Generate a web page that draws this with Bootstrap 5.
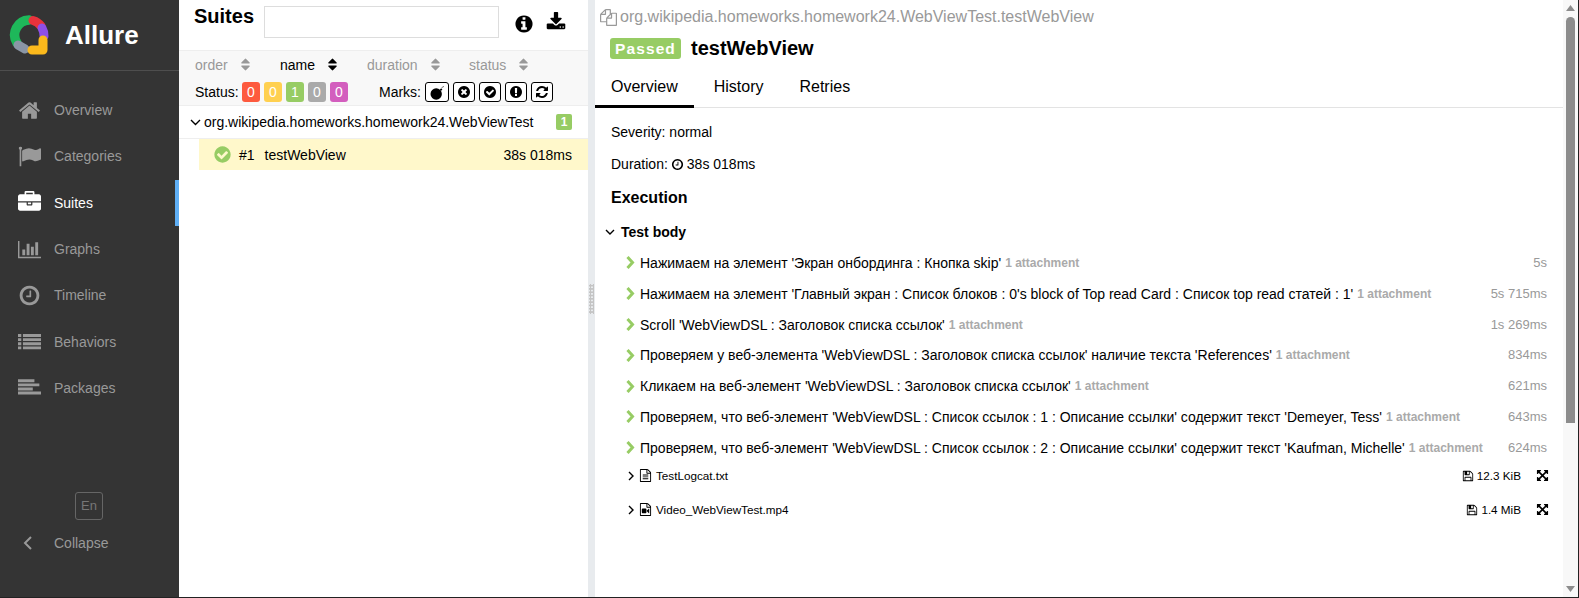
<!DOCTYPE html>
<html lang="en">
<head>
    <meta charset="UTF-8">
    <meta name="viewport" content="width=device-width, initial-scale=1.0">
    <title>Allure Report</title>
    <link href="https://cdn.jsdelivr.net/npm/bootstrap@5.3.0/dist/css/bootstrap.min.css" rel="stylesheet">
    <style>
        html, body { height: 100%; overflow: hidden; }
        body { font-family: "Liberation Sans", Arial, sans-serif; font-size: 14px; line-height: 20px; color: #000; background: #fff; }
        .fa { width: 1em; height: 1em; fill: currentColor; flex: none; display: block; }
        .app-shell { height: 598px; border-right: 1px solid #222; border-bottom: 1px solid #222; }

        /* side menu */
        .side-menu { width: 179px; flex: none; background: #343434; color: #999; }
        .side-brand { height: 71px; border-bottom: 1px solid #4e4e4e; padding-left: 8px; }
        .side-brand-name { font-size: 26px; font-weight: 700; color: #fff; margin-left: 15px; }
        .side-links { margin-top: 16px; }
        .side-link { height: 46.3px; padding-left: 18px; color: #999; text-decoration: none; }
        .side-link .fa { font-size: 23px; }
        .side-link span { margin-left: 13px; }
        .side-link.is-active { color: #fff; border-right: 4px solid #5faff5; }
        .lang-box { width: 28px; height: 28px; margin: 0 0 8px 75px; border: 1px solid #666; border-radius: 3px; color: #777; font-size: 13px; }
        .side-collapse { height: 30px; padding-left: 23px; margin-bottom: 39px; }
        .side-collapse span { margin-left: 22px; }

        /* tree pane */
        .tree-pane { width: 409px; flex: none; }
        .tree-head { height: 51px; padding: 6px 22px 0 15px; border-bottom: 1px solid #eee; }
        .tree-title { font-size: 20px; font-weight: 700; line-height: 24px; width: 70px; margin-top: -2px; }
        .tree-search { width: 235px; height: 32px; border: 1px solid #ddd; border-radius: 0; padding: 0 6px; }
        .tree-info { font-size: 20px; margin: 8px 0 0 15px; }
        .tree-save { font-size: 20px; margin: 6px 0 0 12px; }
        .tree-tools { height: 55px; background: #f8f8f8; border-bottom: 1px solid #eee; padding: 3px 0 0 16px; }
        .sort-row { height: 21px; color: #999; }
        .sort-col { display: flex; align-items: center; gap: 10px; }
        .sort-col .fa { font-size: 15px; }
        .filter-row { margin-top: 7px; height: 20px; }
        .status-label { width: 47px; }
        .status-pill { width: 18px; height: 20px; border-radius: 3px; color: #fff; text-align: center; margin-right: 4px; }
        .st-failed { background: #fd5a3e; }
        .st-broken { background: #ffd050; }
        .st-passed { background: #97cc64; }
        .st-skipped { background: #aaa; }
        .st-unknown { background: #d35ebe; }
        .marks-label { width: 46px; margin-left: 27px; }
        .mark-btn { width: 22px; height: 20px; padding: 0; border: 1px solid #000; border-radius: 3px; background: #fff; color: #000; margin-right: 4px; }
        .mark-btn:first-of-type { width: 24px; }
        .mark-btn .fa { font-size: 14px; }
        .mark-btn:first-of-type .fa { font-size: 17px; }
        .group-row { height: 33px; padding: 0 16px 0 11px; border-bottom: 1px solid #eee; }
        .group-arrow { margin-right: 3px; }
        .group-count { width: 16px; height: 16px; border-radius: 2px; background: #97cc64; color: #fff; font-size: 12px; font-weight: 700; line-height: 16px; text-align: center; }
        .case-row { height: 31px; margin-left: 20px; padding: 0 16px 0 14px; background: #fff8cb; }
        .case-ok { color: #97cc64; font-size: 19px; }
        .case-num { margin-left: 7px; }
        .case-name { margin-left: 10px; }

        .pane-split { width: 7px; flex: none; background: #e8ebee; }
        .pane-grip { width: 5px; height: 30px; background-image: radial-gradient(#c4c4c4 1.3px, transparent 1.4px); background-size: 3px 3.3px; }

        /* detail pane */
        .detail-pane { min-width: 0; }
        .crumb-row { height: 34px; padding-left: 5px; color: #999; font-size: 16px; }
        .crumb-row .fa { font-size: 17px; margin-right: 3px; }
        .title-row { height: 27px; padding-left: 15px; }
        .state-tag { width: 71px; height: 21px; margin-top: 1px; background: #97cc64; color: #fff; font-size: 15.5px; font-weight: 700; letter-spacing: 1.1px; border-radius: 3px; line-height: 21px; text-align: center; }
        .case-title { font-size: 20px; font-weight: 700; margin-left: 10px; }
        .tab-strip { height: 47px; border-bottom: 1px solid #e3e3e3; gap: 4px; }
        .tab-strip .nav-link { font-size: 16px; color: #000; padding: 16px 16px 0; height: 47px; line-height: 20px; }
        .tab-strip .nav-link.active { border-bottom: 3px solid #000; }
        .detail-body { padding: 14px 0 0 16px; }
        .info-line { height: 32px; }
        .info-line .fa { font-size: 13px; margin: 0 3px; }
        .exec-title { font-size: 16px; font-weight: 700; line-height: 20px; margin: 2px 0 14px; }
        .body-title { font-weight: 700; height: 20px; margin: 0 0 11px -6px; }
        .body-title svg { margin-right: 6px; }
        .step-list { margin-left: 15px; padding-right: 16px; }
        .step-row { height: 30.8px; padding-bottom: 11px; }
        .step-arrow { margin-right: 5px; flex: none; }
        .step-note { color: #aaa; font-size: 12px; font-weight: 700; margin-left: 4px; }
        .step-time { margin-left: auto; color: #999; font-size: 13px; }
        .file-row { height: 34px; font-size: 11.7px; padding-bottom: 20px; }
        .file-row .fa { font-size: 13px; }
        .file-arrow { margin: 0 4px 0 2px; flex: none; }
        .file-name { margin-left: 4px; }
        .file-size { margin-left: auto; display: flex; align-items: center; gap: 3px; }
        .file-size .fa { font-size: 12px; }
        .file-open { margin: 0 -2px 0 15px; }

        .fake-scroll { width: 15px; flex: none; background: #f8f8f8; padding: 5px 3px; }
        .scroll-thumb { width: 9px; height: 406px; margin-top: 6px; background: #8c8c8c; border-radius: 5px 5px 0 0; }
    </style>
</head>
<body>
<svg width="0" height="0" class="position-absolute">
    <symbol id="i-home" viewBox="0 0 1792 1792"><path d="M1472 992v480q0 26-19 45t-45 19h-384v-384h-256v384h-384q-26 0-45-19t-19-45v-480q0-1 .5-3t.5-3l575-474 575 474q1 2 1 6zm223-69l-62 74q-8 9-21 11h-3q-13 0-21-7l-692-577-692 577q-12 8-24 7-13-2-21-11l-62-74q-8-10-7-23.5t11-21.5l719-599q32-26 76-26t76 26l244 204v-195q0-14 9-23t23-9h192q14 0 23 9t9 23v408l219 182q10 8 11 21.5t-7 23.5z"/></symbol>
    <symbol id="i-flag" viewBox="0 0 1792 1792"><path d="M320 256q0 72-64 110v1266q0 13-9.5 22.5t-22.5 9.5h-64q-13 0-22.5-9.5t-9.5-22.5v-1266q-64-38-64-110 0-53 37.5-90.5t90.5-37.5 90.5 37.5 37.5 90.5zm1472 64v763q0 25-12.5 38.5t-39.5 27.5q-215 116-369 116-61 0-123.5-22t-108.5-48-115.5-48-142.5-22q-192 0-464 146-17 9-33 9-26 0-45-19t-19-45v-742q0-32 31-55 21-14 79-43 236-120 421-120 107 0 200 29t219 88q38 19 88 19 54 0 117.5-21t110-47 88-47 54.5-21q26 0 45 19t19 45z"/></symbol>
    <symbol id="i-case" viewBox="0 0 1792 1792"><path d="M640 256h512v-128h-512v128zm1152 640v480q0 66-47 113t-113 47h-1472q-66 0-113-47t-47-113v-480h672v160q0 26 19 45t45 19h320q26 0 45-19t19-45v-160h672zm-768 0v128h-256v-128h256zm768-480v384h-1792v-384q0-66 47-113t113-47h352v-160q0-40 28-68t68-28h576q40 0 68 28t28 68v160h352q66 0 113 47t47 113z"/></symbol>
    <symbol id="i-chart" viewBox="0 0 2048 1792"><path d="M640 896v512h-256v-512h256zm384-512v1024h-256v-1024h256zm1024 1152v128h-2048v-1536h128v1408h1920zm-640-896v768h-256v-768h256zm384-384v1152h-256v-1152h256z"/></symbol>
    <symbol id="i-clock" viewBox="0 0 1792 1792"><path d="M1024 544v448q0 14-9 23t-23 9h-320q-14 0-23-9t-9-23v-64q0-14 9-23t23-9h224v-352q0-14 9-23t23-9h64q14 0 23 9t9 23zm416 352q0-148-73-273t-198-198-273-73-273 73-198 198-73 273 73 273 198 198 273 73 273-73 198-198 73-273zm224 0q0 209-103 385.5t-279.5 279.5-385.5 103-385.5-103-279.5-279.5-103-385.5 103-385.5 279.5-279.5 385.5-103 385.5 103 279.5 279.5 103 385.5z"/></symbol>
    <symbol id="i-list" viewBox="0 0 1792 1792"><path d="M0 320h256v224H0zM384 320h1408v224H384zM0 640h256v224H0zM384 640h1408v224H384zM0 960h256v224H0zM384 960h1408v224H384zM0 1280h256v224H0zM384 1280h1408v224H384z"/></symbol>
    <symbol id="i-align" viewBox="0 0 1792 1792"><path d="M0 256h1280v224H0zM0 576h1664v224H0zM0 896h1152v224H0zM0 1216h1792v224H0z"/></symbol>
    <symbol id="i-info" viewBox="0 0 1792 1792"><path d="M1152 1376v-160q0-14-9-23t-23-9h-96v-512q0-14-9-23t-23-9h-320q-14 0-23 9t-9 23v160q0 14 9 23t23 9h96v320h-96q-14 0-23 9t-9 23v160q0 14 9 23t23 9h448q14 0 23-9t9-23zm-128-896v-160q0-14-9-23t-23-9h-192q-14 0-23 9t-9 23v160q0 14 9 23t23 9h192q14 0 23-9t9-23zm640 416q0 209-103 385.5t-279.5 279.5-385.5 103-385.5-103-279.5-279.5-103-385.5 103-385.5 279.5-279.5 385.5-103 385.5 103 279.5 279.5 103 385.5z"/></symbol>
    <symbol id="i-down" viewBox="0 0 1792 1792"><path d="M1344 1344q0-26-19-45t-45-19-45 19-19 45 19 45 45 19 45-19 19-45zm256 0q0-26-19-45t-45-19-45 19-19 45 19 45 45 19 45-19 19-45zm128-224v320q0 40-28 68t-68 28h-1472q-40 0-68-28t-28-68v-320q0-40 28-68t68-28h465l135 136q58 56 136 56t136-56l136-136h464q40 0 68 28t28 68zm-325-569q17 41-14 70l-448 448q-18 19-45 19t-45-19l-448-448q-31-29-14-70 17-39 59-39h256v-448q0-26 19-45t45-19h256q26 0 45 19t19 45v448h256q42 0 59 39z"/></symbol>
    <symbol id="i-sort" viewBox="0 0 1792 1792"><path d="M1408 1088q0 26-19 45l-448 448q-19 19-45 19t-45-19l-448-448q-19-19-19-45t19-45 45-19h896q26 0 45 19t19 45zm0-384q0 26-19 45t-45 19h-896q-26 0-45-19t-19-45 19-45l448-448q19-19 45-19t45 19l448 448q19 19 19 45z"/></symbol>
    <symbol id="i-bomb" viewBox="0 0 1792 1792"><circle cx="760" cy="1060" r="600"/><path d="M1130 600l150-150 130 130-150 150z"/><path d="M1360 400q60-130 200-130" fill="none" stroke="currentColor" stroke-width="70"/></symbol>
    <symbol id="i-times" viewBox="0 0 1792 1792"><path d="M1277 1122q0-26-19-45l-181-181 181-181q19-19 19-45 0-27-19-46l-90-90q-19-19-46-19-26 0-45 19l-181 181-181-181q-19-19-45-19-27 0-46 19l-90 90q-19 19-19 46 0 26 19 45l181 181-181 181q-19 19-19 45 0 27 19 46l90 90q19 19 46 19 26 0 45-19l181-181 181 181q19 19 45 19 27 0 46-19l90-90q19-19 19-46zm387-226q0 209-103 385.5t-279.5 279.5-385.5 103-385.5-103-279.5-279.5-103-385.5 103-385.5 279.5-279.5 385.5-103 385.5 103 279.5 279.5 103 385.5z"/></symbol>
    <symbol id="i-check" viewBox="0 0 1792 1792"><path d="M1412 734q0-28-18-46l-91-90q-19-19-45-19t-45 19l-408 407-226-226q-19-19-45-19t-45 19l-91 90q-18 18-18 46 0 27 18 45l362 362q19 19 45 19 27 0 46-19l543-543q18-18 18-45zm252 162q0 209-103 385.5t-279.5 279.5-385.5 103-385.5-103-279.5-279.5-103-385.5 103-385.5 279.5-279.5 385.5-103 385.5 103 279.5 279.5 103 385.5z"/></symbol>
    <symbol id="i-excl" viewBox="0 0 1792 1792"><path d="M896 128q209 0 385.5 103t279.5 279.5 103 385.5-103 385.5-279.5 279.5-385.5 103-385.5-103-279.5-279.5-103-385.5 103-385.5 279.5-279.5 385.5-103zm128 1247v-190q0-14-9-23.5t-22-9.5h-192q-13 0-23 10t-10 23v189q0 13 10 23t23 10h192q13 0 22-9.5t9-22.5zm-2-344l18-621q0-12-10-18-10-8-24-8h-220q-14 0-24 8-10 6-10 18l17 621q0 10 10 17.5t24 7.5h185q14 0 23.5-7.5t10.5-17.5z"/></symbol>
    <symbol id="i-refresh" viewBox="0 0 1792 1792"><path d="M1639 1056q0 5-1 7-64 268-268 434.5t-478 166.5q-146 0-282.5-55t-243.5-157l-129 129q-19 19-45 19t-45-19-19-45v-448q0-26 19-45t45-19h448q26 0 45 19t19 45-19 45l-137 137q71 66 161 102t187 36q134 0 250-65t186-179q11-17 53-117 8-23 30-23h192q13 0 22.5 9.5t9.5 22.5zm25-800v448q0 26-19 45t-45 19h-448q-26 0-45-19t-19-45 19-45l138-138q-148-137-349-137-134 0-250 65t-186 179q-11 17-53 117-8 23-30 23h-199q-13 0-22.5-9.5t-9.5-22.5v-7q65-268 270-434.5t480-166.5q146 0 284 55.5t245 156.5l130-129q19-19 45-19t45 19 19 45z"/></symbol>
    <symbol id="i-files" viewBox="0 0 1792 1792"><path d="M1696 384q40 0 68 28t28 68v1216q0 40-28 68t-68 28h-960q-40 0-68-28t-28-68v-288h-544q-40 0-68-28t-28-68v-672q0-40 20-88t48-76l408-408q28-28 76-48t88-20h416q40 0 68 28t28 68v328q68-40 128-40h416zm-544 213l-299 299h299v-299zm-640-384l-299 299h299v-299zm196 647l316-316v-416h-384v416q0 40-28 68t-68 28h-416v640h512v-256q0-40 20-88t48-76zm956 804v-1152h-384v416q0 40-28 68t-68 28h-416v640h896z"/></symbol>
    <symbol id="i-text" viewBox="0 0 1792 1792"><path d="M1596 380q28 28 48 76t20 88v1152q0 40-28 68t-68 28h-1344q-40 0-68-28t-28-68v-1600q0-40 28-68t68-28h896q40 0 88 20t76 48zm-444-244v376h376q-10-29-22-41l-313-313q-12-12-41-22zm384 1528v-1024h-416q-40 0-68-28t-28-68v-416h-768v1536h1280zm-1024-864q0-14 9-23t23-9h704q14 0 23 9t9 23v64q0 14-9 23t-23 9h-704q-14 0-23-9t-9-23v-64zm736 224q14 0 23 9t9 23v64q0 14-9 23t-23 9h-704q-14 0-23-9t-9-23v-64q0-14 9-23t23-9h704zm0 256q14 0 23 9t9 23v64q0 14-9 23t-23 9h-704q-14 0-23-9t-9-23v-64q0-14 9-23t23-9h704z"/></symbol>
    <symbol id="i-video" viewBox="0 0 1792 1792"><path d="M1596 380q28 28 48 76t20 88v1152q0 40-28 68t-68 28h-1344q-40 0-68-28t-28-68v-1600q0-40 28-68t68-28h896q40 0 88 20t76 48zm-444-244v376h376q-10-29-22-41l-313-313q-12-12-41-22zm384 1528v-1024h-416q-40 0-68-28t-28-68v-416h-768v1536h1280zm-640-896q52 0 90 38t38 90v384q0 52-38 90t-90 38h-384q-52 0-90-38t-38-90v-384q0-52 38-90t90-38h384zm492 2q20 8 20 30v576q0 22-20 30-8 2-12 2-14 0-23-9l-265-266v-90l265-266q9-9 23-9 4 0 12 2z"/></symbol>
    <symbol id="i-save" viewBox="0 0 1792 1792"><path d="M512 1536h768v-384h-768v384zm896 0h128v-896q0-14-10-38.5t-20-34.5l-281-281q-10-10-34-20t-39-10v416q0 40-28 68t-68 28h-576q-40 0-68-28t-28-68v-416h-128v1280h128v-416q0-40 28-68t68-28h832q40 0 68 28t28 68v416zm-384-928v-320q0-13-9.5-22.5t-22.5-9.5h-192q-13 0-22.5 9.5t-9.5 22.5v320q0 13 9.5 22.5t22.5 9.5h192q13 0 22.5-9.5t9.5-22.5zm640 32v928q0 40-28 68t-68 28h-1344q-40 0-68-28t-28-68v-1344q0-40 28-68t68-28h928q40 0 88 20t76 48l280 280q28 28 48 76t20 88z"/></symbol>
    <symbol id="i-expand" viewBox="0 0 1792 1792"><path d="M1411 541l-355 355 355 355 144-144q29-31 70-14 39 17 39 59v448q0 26-19 45t-45 19h-448q-42 0-59-40-17-39 14-69l144-144-355-355-355 355 144 144q31 30 14 69-17 40-59 40h-448q-26 0-45-19t-19-45v-448q0-42 40-59 39-17 69 14l144 144 355-355-355-355-144 144q-19 19-45 19-12 0-24-5-40-17-40-59v-448q0-26 19-45t45-19h448q42 0 59 40 17 39-14 69l-144 144 355 355 355-355-144-144q-31-30-14-69 17-40 59-40h448q26 0 45 19t19 45v448q0 42-39 59-13 5-25 5-26 0-45-19z"/></symbol>
</svg>

<div class="app-shell d-flex">
    <nav class="side-menu d-flex flex-column">
        <div class="side-brand d-flex align-items-center">
            <svg width="42" height="42" viewBox="0 0 42 42" fill="none" stroke-width="9" stroke-linecap="round">
                <path d="M9 29A15 15 0 0 1 21 6" stroke="#1eb85a" stroke-width="9.5"/>
                <path d="M25 6.5A15 15 0 0 1 33 12" stroke="#e8323c"/>
                <path d="M34 14A15 15 0 0 1 36 22" stroke="#8e4fe8"/>
                <path d="M10 31L17 35" stroke="#8a96a6"/>
                <path d="M35 26V36M24 36H35" stroke="#fbb91c"/>
            </svg>
            <span class="side-brand-name">Allure</span>
        </div>
        <div class="side-links">
            <a class="side-link d-flex align-items-center" href="#"><svg class="fa"><use href="#i-home"/></svg><span>Overview</span></a>
            <a class="side-link d-flex align-items-center" href="#"><svg class="fa"><use href="#i-flag"/></svg><span>Categories</span></a>
            <a class="side-link is-active d-flex align-items-center" href="#"><svg class="fa"><use href="#i-case"/></svg><span>Suites</span></a>
            <a class="side-link d-flex align-items-center" href="#"><svg class="fa"><use href="#i-chart"/></svg><span>Graphs</span></a>
            <a class="side-link d-flex align-items-center" href="#"><svg class="fa"><use href="#i-clock"/></svg><span>Timeline</span></a>
            <a class="side-link d-flex align-items-center" href="#"><svg class="fa"><use href="#i-list"/></svg><span>Behaviors</span></a>
            <a class="side-link d-flex align-items-center" href="#"><svg class="fa"><use href="#i-align"/></svg><span>Packages</span></a>
        </div>
        <div class="mt-auto">
            <div class="lang-box d-flex align-items-center justify-content-center">En</div>
            <div class="side-collapse d-flex align-items-center">
                <svg width="9" height="14" viewBox="0 0 9 14" fill="none" stroke="#999" stroke-width="2"><path d="M8 1L2 7l6 6"/></svg>
                <span>Collapse</span>
            </div>
        </div>
    </nav>

    <section class="tree-pane d-flex flex-column">
        <div class="tree-head d-flex">
            <div class="tree-title">Suites</div>
            <input class="tree-search" type="text" aria-label="Search">
            <svg class="fa tree-info"><use href="#i-info"/></svg>
            <svg class="fa tree-save"><use href="#i-down"/></svg>
        </div>
        <div class="tree-tools">
            <div class="sort-row d-flex">
                <div class="sort-col" style="width:85px">order<svg class="fa"><use href="#i-sort"/></svg></div>
                <div class="sort-col text-black" style="width:87px">name<svg class="fa"><use href="#i-sort"/></svg></div>
                <div class="sort-col" style="width:102px">duration<svg class="fa"><use href="#i-sort"/></svg></div>
                <div class="sort-col">status<svg class="fa"><use href="#i-sort"/></svg></div>
            </div>
            <div class="filter-row d-flex align-items-center">
                <span class="status-label">Status:</span>
                <span class="status-pill st-failed">0</span>
                <span class="status-pill st-broken">0</span>
                <span class="status-pill st-passed">1</span>
                <span class="status-pill st-skipped">0</span>
                <span class="status-pill st-unknown">0</span>
                <span class="marks-label">Marks:</span>
                <button class="mark-btn d-flex align-items-center justify-content-center"><svg class="fa"><use href="#i-bomb"/></svg></button>
                <button class="mark-btn d-flex align-items-center justify-content-center"><svg class="fa"><use href="#i-times"/></svg></button>
                <button class="mark-btn d-flex align-items-center justify-content-center"><svg class="fa"><use href="#i-check"/></svg></button>
                <button class="mark-btn d-flex align-items-center justify-content-center"><svg class="fa"><use href="#i-excl"/></svg></button>
                <button class="mark-btn d-flex align-items-center justify-content-center"><svg class="fa"><use href="#i-refresh"/></svg></button>
            </div>
        </div>
        <div class="group-row d-flex align-items-center">
            <svg width="11" height="7" viewBox="0 0 11 7" fill="none" stroke="#000" stroke-width="1.4" class="group-arrow"><path d="M1 1l4.5 4.5L10 1"/></svg>
            <span>org.wikipedia.homeworks.homework24.WebViewTest</span>
            <span class="group-count ms-auto">1</span>
        </div>
        <div class="case-row d-flex align-items-center">
            <svg class="fa case-ok"><use href="#i-check"/></svg>
            <span class="case-num">#1</span>
            <span class="case-name">testWebView</span>
            <span class="ms-auto">38s 018ms</span>
        </div>
    </section>

    <div class="pane-split d-flex align-items-center justify-content-center"><div class="pane-grip"></div></div>

    <main class="detail-pane flex-grow-1">
        <div class="crumb-row d-flex align-items-center"><svg class="fa"><use href="#i-files"/></svg>org.wikipedia.homeworks.homework24.WebViewTest.testWebView</div>
        <div class="title-row d-flex align-items-center">
            <span class="state-tag">Passed</span>
            <span class="case-title">testWebView</span>
        </div>
        <ul class="nav tab-strip">
            <li class="nav-item"><a class="nav-link active" href="#">Overview</a></li>
            <li class="nav-item"><a class="nav-link" href="#">History</a></li>
            <li class="nav-item"><a class="nav-link" href="#">Retries</a></li>
        </ul>
        <div class="detail-body">
            <div class="info-line">Severity: normal</div>
            <div class="info-line d-flex align-items-start"><span>Duration:</span><svg class="fa mt-1"><use href="#i-clock"/></svg><span>38s 018ms</span></div>
            <div class="exec-title">Execution</div>
            <div class="body-title d-flex align-items-center">
                <svg width="10" height="7" viewBox="0 0 10 7" fill="none" stroke="#000" stroke-width="1.4"><path d="M1 1l4 4 4-4"/></svg>Test body
            </div>
            <div class="step-list" id="steps"></div>
        </div>
    </main>

    <aside class="fake-scroll d-flex flex-column align-items-center">
        <svg width="9" height="6" viewBox="0 0 9 6" fill="#8c8c8c"><path d="M4.5 0L9 6H0z"/></svg>
        <div class="scroll-thumb"></div>
        <svg width="9" height="6" viewBox="0 0 9 6" fill="#8c8c8c" class="mt-auto"><path d="M0 0h9L4.5 6z"/></svg>
    </aside>
</div>

<script src="https://cdn.jsdelivr.net/npm/bootstrap@5.3.0/dist/js/bootstrap.bundle.min.js"></script>
<script>
    const steps = [
        ["Нажимаем на элемент 'Экран онбординга : Кнопка skip'", "5s"],
        ["Нажимаем на элемент 'Главный экран : Список блоков : 0's block of Top read Card : Список top read статей : 1'", "5s 715ms"],
        ["Scroll 'WebViewDSL : Заголовок списка ссылок'", "1s 269ms"],
        ["Проверяем у веб-элемента 'WebViewDSL : Заголовок списка ссылок' наличие текста 'References'", "834ms"],
        ["Кликаем на веб-элемент 'WebViewDSL : Заголовок списка ссылок'", "621ms"],
        ["Проверяем, что веб-элемент 'WebViewDSL : Список ссылок : 1 : Описание ссылки' содержит текст 'Demeyer, Tess'", "643ms"],
        ["Проверяем, что веб-элемент 'WebViewDSL : Список ссылок : 2 : Описание ссылки' содержит текст 'Kaufman, Michelle'", "624ms"]
    ];
    const files = [
        ["i-text", "TestLogcat.txt", "12.3 KiB"],
        ["i-video", "Video_WebViewTest.mp4", "1.4 MiB"]
    ];

    let html = "";
    steps.forEach(step => {
        html += `
            <div class="step-row d-flex align-items-center">
                <svg class="step-arrow" width="9" height="13" viewBox="0 0 9 13" fill="none" stroke="#97cc64" stroke-width="3"><path d="M1.5 1l5 5.5-5 5.5"/></svg>
                <span>${step[0]}</span>
                <span class="step-note">1 attachment</span>
                <span class="step-time">${step[1]}</span>
            </div>`;
    });
    files.forEach(file => {
        html += `
            <div class="file-row d-flex align-items-center">
                <svg class="file-arrow" width="7" height="10" viewBox="0 0 7 10" fill="none" stroke="#000" stroke-width="1.4"><path d="M1 1l4 4-4 4"/></svg>
                <svg class="fa"><use href="#${file[0]}"/></svg>
                <span class="file-name">${file[1]}</span>
                <span class="file-size"><svg class="fa"><use href="#i-save"/></svg>${file[2]}</span>
                <svg class="fa file-open"><use href="#i-expand"/></svg>
            </div>`;
    });
    document.getElementById("steps").innerHTML = html;
</script>
</body>
</html>
